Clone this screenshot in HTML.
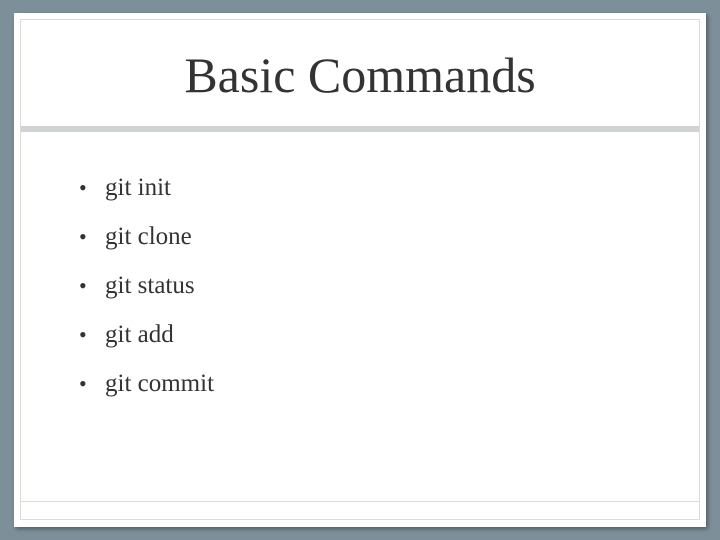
<!DOCTYPE html>
<html><head><style>
body{margin:0;width:720px;height:540px;background:#7d8f98;position:relative;overflow:hidden;font-family:"Liberation Serif",serif;color:#333}
.panel{position:absolute;left:14px;top:13px;width:692px;height:514px;background:#fff;box-shadow:2px 2px 4px rgba(0,0,0,.35)}
.inner{position:absolute;left:20px;top:19px;width:678px;height:499px;border:1px solid #dcdcd4}
.bar{position:absolute;left:21px;top:126px;width:678px;height:6px;background:#cfd3d4}
.foot{position:absolute;left:21px;top:501px;width:678px;border-top:1px solid #dcdcd4}
h1{position:absolute;left:0;width:720px;top:45px;margin:0;text-align:center;font-weight:normal;font-size:50px;line-height:60px}
.li{position:absolute;left:105px;font-size:25px;line-height:30px}
.li:before{content:"•";position:absolute;left:-26px;font-size:22px}
</style></head><body>
<div class="panel"></div><div class="inner"></div><div class="bar"></div><div class="foot"></div>
<h1>Basic Commands</h1>
<div class="li" style="top:173px">git init</div>
<div class="li" style="top:222px">git clone</div>
<div class="li" style="top:271px">git status</div>
<div class="li" style="top:320px">git add</div>
<div class="li" style="top:369px">git commit</div>
</body></html>
